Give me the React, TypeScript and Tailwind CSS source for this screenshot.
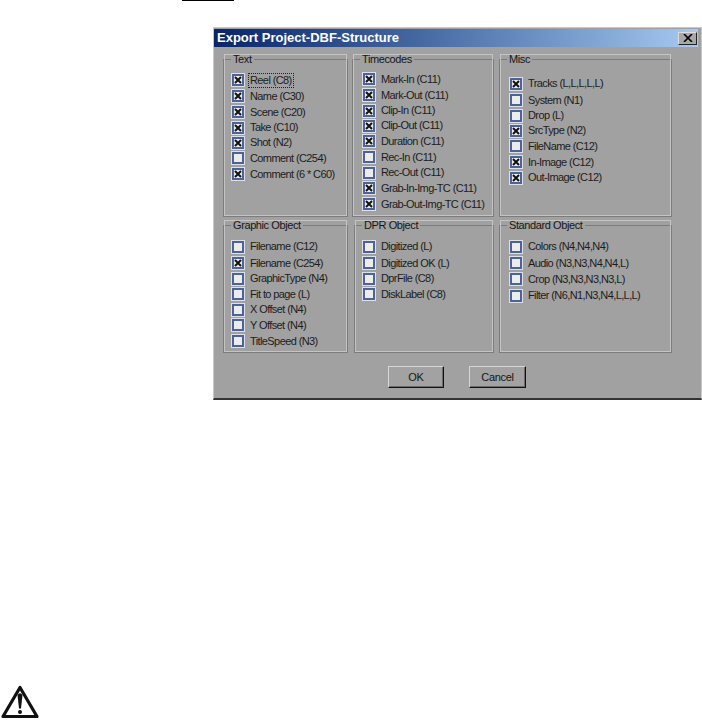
import { FC } from "react";

type Row = { label: string; checked?: boolean; focused?: boolean; h: string };

const Check: FC<{ checked?: boolean }> = ({ checked }) => (
  <span className="flex h-[14px] w-[14px] shrink-0 items-center justify-center border border-[#dde0e8] bg-[#dde0e8]">
    <span className="flex h-[12px] w-[12px] items-center justify-center border-2 border-[#4d6296] bg-[#ececec]">
      {checked && (
        <svg width="8" height="8" viewBox="0 0 8 8">
          <path d="M1 1 L7 7 M7 1 L1 7" stroke="#111" strokeWidth="2" />
        </svg>
      )}
    </span>
  </span>
);

const Group: FC<{ title: string; rows: Row[]; className: string; bodyTop: string; legendLeft: string }> = ({
  title,
  rows,
  className,
  bodyTop,
  legendLeft,
}) => (
  <fieldset className={`min-w-0 shrink-0 border border-[#7c7c7c] outline outline-1 -outline-offset-2 outline-[#c4c4c4] ${className}`}>
    <legend className={`px-[2px] text-[11px] leading-[12px] tracking-[-0.4px] text-[#161616] ${legendLeft}`}>{title}</legend>
    <div className={`flex flex-col ${bodyTop}`}>
      {rows.map((r, i) => (
        <div key={i} className={`flex items-center gap-[5px] ${r.h}`}>
          <Check checked={r.checked} />
          <span
            className={`whitespace-nowrap text-[11px] leading-none tracking-[-0.6px] text-[#1c1c1c] ${
              r.focused ? "outline outline-1 outline-offset-[1px] outline-dotted outline-[#222]" : ""
            }`}
          >
            {r.label}
          </span>
        </div>
      ))}
    </div>
  </fieldset>
);

const textRows: Row[] = [
  { label: "Reel (C8)", checked: true, focused: true, h: "h-[16px]" },
  { label: "Name (C30)", checked: true, h: "h-[16px]" },
  { label: "Scene (C20)", checked: true, h: "h-[16px]" },
  { label: "Take (C10)", checked: true, h: "h-[15px]" },
  { label: "Shot (N2)", checked: true, h: "h-[15px]" },
  { label: "Comment (C254)", h: "h-[16px]" },
  { label: "Comment (6 * C60)", checked: true, h: "h-[16px]" },
];

const timeRows: Row[] = [
  { label: "Mark-In (C11)", checked: true, h: "h-[16px]" },
  { label: "Mark-Out (C11)", checked: true, h: "h-[16px]" },
  { label: "Clip-In (C11)", checked: true, h: "h-[15px]" },
  { label: "Clip-Out (C11)", checked: true, h: "h-[15px]" },
  { label: "Duration (C11)", checked: true, h: "h-[16px]" },
  { label: "Rec-In (C11)", h: "h-[16px]" },
  { label: "Rec-Out (C11)", h: "h-[15px]" },
  { label: "Grab-In-Img-TC (C11)", checked: true, h: "h-[16px]" },
  { label: "Grab-Out-Img-TC (C11)", checked: true, h: "h-[16px]" },
];

const miscRows: Row[] = [
  { label: "Tracks (L,L,L,L,L)", checked: true, h: "h-[17px]" },
  { label: "System (N1)", h: "h-[16px]" },
  { label: "Drop (L)", h: "h-[15px]" },
  { label: "SrcType (N2)", checked: true, h: "h-[15px]" },
  { label: "FileName (C12)", h: "h-[16px]" },
  { label: "In-Image (C12)", checked: true, h: "h-[16px]" },
  { label: "Out-Image (C12)", checked: true, h: "h-[15px]" },
];

const graphicRows: Row[] = [
  { label: "Filename (C12)", h: "h-[17px]" },
  { label: "Filename (C254)", checked: true, h: "h-[16px]" },
  { label: "GraphicType (N4)", h: "h-[15px]" },
  { label: "Fit to page (L)", h: "h-[16px]" },
  { label: "X Offset (N4)", h: "h-[15px]" },
  { label: "Y Offset (N4)", h: "h-[16px]" },
  { label: "TitleSpeed (N3)", h: "h-[16px]" },
];

const dprRows: Row[] = [
  { label: "Digitized (L)", h: "h-[17px]" },
  { label: "Digitized OK (L)", h: "h-[16px]" },
  { label: "DprFile (C8)", h: "h-[15px]" },
  { label: "DiskLabel (C8)", h: "h-[16px]" },
];

const standardRows: Row[] = [
  { label: "Colors (N4,N4,N4)", h: "h-[17px]" },
  { label: "Audio (N3,N3,N4,N4,L)", h: "h-[16px]" },
  { label: "Crop (N3,N3,N3,N3,L)", h: "h-[16px]" },
  { label: "Filter (N6,N1,N3,N4,L,L,L)", h: "h-[17px]" },
];

const DialogButton: FC<{ label: string; className: string }> = ({ label, className }) => (
  <button
    className={`flex h-[22px] items-center justify-center border border-b-[#111] border-l-[#d6d6d6] border-r-[#111] border-t-[#d6d6d6] bg-[#a2a2a2] text-[11px] tracking-[-0.3px] text-[#161616] shadow-[inset_-1px_-1px_0_#6c6c6c] ${className}`}
  >
    {label}
  </button>
);

export default function App() {
  return (
    <div className="relative h-[723px] w-[702px] overflow-hidden bg-white font-['Liberation_Sans',sans-serif]">
      <div className="ml-[182px] h-[1px] w-[52px] bg-black" />
      <div className="ml-[213px] mt-[26px] h-[373px] w-[489px] border-b-2 border-l border-r border-t border-b-[#333] border-l-[#c8c8c8] border-r-[#c8c8c8] border-t-[#c8c8c8] bg-[#a1a1a1] pr-[3px] pt-[1px]">
        <div className="flex h-[18px] items-center justify-between bg-gradient-to-r from-[#0a246a] to-[#a6caf0] pl-[3px] pr-[1px]">
          <span className="text-[13px] font-bold text-white">Export Project-DBF-Structure</span>
          <span className="flex h-[13px] w-[19px] items-center justify-center border border-b-[#222] border-l-[#ddd] border-r-[#222] border-t-[#ddd] bg-[#a8a8a8]">
            <svg width="10" height="8" viewBox="0 0 10 8">
              <path d="M1 0 L9 8 M9 0 L1 8" stroke="#000" strokeWidth="1.6" />
            </svg>
          </span>
        </div>
        <div className="pl-[9px] pt-[6px]">
          <div className="flex gap-[4px]">
            <Group title="Text" rows={textRows} legendLeft="ml-0" className="h-[164px] w-[125px] pl-[7px]" bodyTop="pt-[7px]" />
            <Group title="Timecodes" rows={timeRows} legendLeft="-ml-[2px]" className="h-[164px] w-[142px] pl-[9px]" bodyTop="pt-[6px]" />
            <Group title="Misc" rows={miscRows} legendLeft="-ml-[2px]" className="ml-[1px] h-[164px] w-[173px] pl-[9px]" bodyTop="pt-[10px]" />
          </div>
          <div className="mt-[2px] flex gap-[6px]">
            <Group title="Graphic Object" rows={graphicRows} legendLeft="ml-0" className="h-[134px] w-[125px] pl-[7px]" bodyTop="pt-[7px]" />
            <Group title="DPR Object" rows={dprRows} legendLeft="ml-0" className="h-[134px] w-[140px] pl-[7px]" bodyTop="pt-[7px]" />
            <Group title="Standard Object" rows={standardRows} legendLeft="-ml-[2px]" className="-ml-[1px] h-[134px] w-[173px] pl-[9px]" bodyTop="pt-[7px]" />
          </div>
          <div className="mt-[13px] flex gap-[25px] pl-[165px]">
            <DialogButton label="OK" className="w-[56px]" />
            <DialogButton label="Cancel" className="w-[57px]" />
          </div>
        </div>
      </div>
      <svg className="absolute left-0 top-[684px]" width="42" height="39" viewBox="0 0 42 39">
        <path d="M20 3.5 L37 32.5 L3 32.5 Z" fill="none" stroke="#111" strokeWidth="3.2" strokeLinejoin="round" />
        <path d="M17.5 11 Q20 7.5 22.5 11 L21 24.5 L19 24.5 Z" fill="#111" />
        <circle cx="20" cy="28" r="2" fill="#111" />
      </svg>
    </div>
  );
}
